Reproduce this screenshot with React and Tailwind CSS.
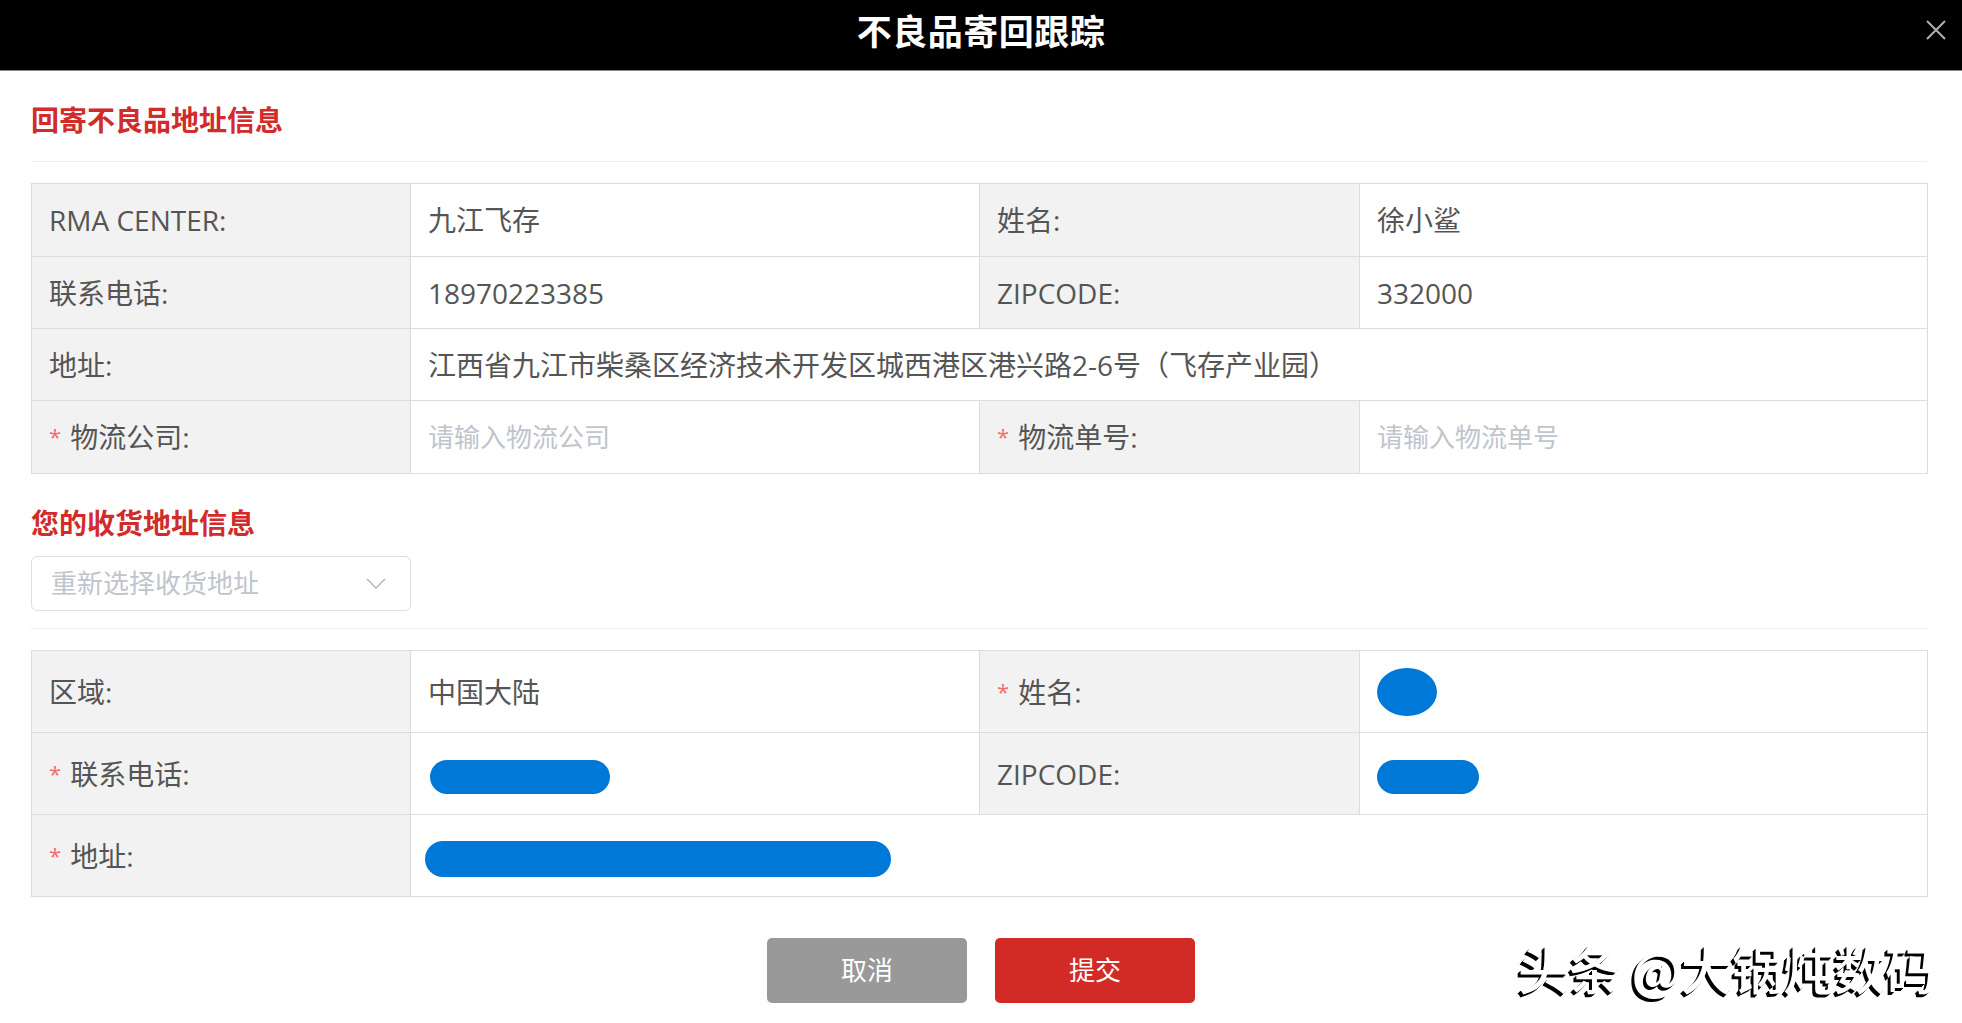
import React from 'react'

const font = "font-['Open_Sans','Noto_Sans_CJK_SC',sans-serif]"

const Req = () => <span className="text-[#f56c6c] text-[22px] mr-[9px] leading-none relative top-[-3px]">*</span>

const Blob = ({ className }) => <span className={`inline-block bg-[#0078d7] align-middle ${className}`} />

const Label = ({ children, req }) => (
  <td className="bg-[#f2f2f2] border border-[#dddddd] pl-[17px] text-[28px] text-[#555555] whitespace-nowrap">
    {req && <Req />}
    {children}
  </td>
)

const Value = ({ children, colSpan, placeholder }) => (
  <td colSpan={colSpan} className={`bg-white border border-[#dddddd] pl-[17px] whitespace-nowrap ${placeholder ? 'text-[26px] text-[#c0c4cc]' : 'text-[28px] text-[#555555]'}`}>
    {children}
  </td>
)

const SectionTitle = ({ children, className }) => (
  <h2 className={`text-[28px] leading-[40px] font-bold text-[#d22b2b] ${className}`}>{children}</h2>
)

const Cols = () => (
  <colgroup>
    <col className="w-[379px]" />
    <col className="w-[569px]" />
    <col className="w-[380px]" />
    <col className="w-[568px]" />
  </colgroup>
)

export default function App() {
  return (
    <div className={`relative w-full h-[1023px] bg-white overflow-hidden ${font}`}>
      {/* header */}
      <div className="relative h-[71px] bg-black border-b border-[#8a8a8a] flex items-center justify-center">
        <h1 className="text-[35px] font-bold text-white tracking-[0.5px] relative top-[-3px]">不良品寄回跟踪</h1>
        <button className="absolute right-[14px] top-[18px] w-[24px] h-[24px] flex items-center justify-center">
          <svg width="22" height="22" viewBox="0 0 22 22" fill="none" stroke="#b0b0b0" strokeWidth="2">
            <path d="M2 2 L20 20 M20 2 L2 20" />
          </svg>
        </button>
      </div>

      <div className="pl-[31px] pr-[35px]">
        <SectionTitle className="mt-[29px]">回寄不良品地址信息</SectionTitle>
        <div className="mt-[21px] h-px bg-[#eeeeee]" />

        <table className="mt-[21px] w-full table-fixed border-collapse">
          <Cols />
          <tbody>
            <tr className="h-[73px]">
              <Label>RMA CENTER:</Label>
              <Value>九江飞存</Value>
              <Label>姓名:</Label>
              <Value>徐小鲨</Value>
            </tr>
            <tr className="h-[72px]">
              <Label>联系电话:</Label>
              <Value>18970223385</Value>
              <Label>ZIPCODE:</Label>
              <Value>332000</Value>
            </tr>
            <tr className="h-[72px]">
              <Label>地址:</Label>
              <Value colSpan={3}>江西省九江市柴桑区经济技术开发区城西港区港兴路2-6号（飞存产业园）</Value>
            </tr>
            <tr className="h-[73px]">
              <Label req>物流公司:</Label>
              <Value placeholder>请输入物流公司</Value>
              <Label req>物流单号:</Label>
              <Value placeholder>请输入物流单号</Value>
            </tr>
          </tbody>
        </table>

        <SectionTitle className="mt-[29px]">您的收货地址信息</SectionTitle>

        <div className="mt-[13px] w-[380px] h-[55px] border border-[#dcdfe6] rounded-[6px] flex items-center justify-between pl-[19px] pr-[24px]">
          <span className="text-[26px] text-[#c0c4cc]">重新选择收货地址</span>
          <svg width="20" height="12" viewBox="0 0 20 12" fill="none" stroke="#b8b8b8" strokeWidth="1.5">
            <path d="M1 1 L10 10 L19 1" />
          </svg>
        </div>

        <div className="mt-[17px] h-px bg-[#eeeeee]" />

        <table className="mt-[21px] w-full table-fixed border-collapse">
          <Cols />
          <tbody>
            <tr className="h-[82px]">
              <Label>区域:</Label>
              <Value>中国大陆</Value>
              <Label req>姓名:</Label>
              <Value>
                <Blob className="w-[60px] h-[48px] rounded-[50%]" />
              </Value>
            </tr>
            <tr className="h-[82px]">
              <Label req>联系电话:</Label>
              <Value>
                <Blob className="ml-[2px] w-[180px] h-[34px] rounded-full" />
              </Value>
              <Label>ZIPCODE:</Label>
              <Value>
                <Blob className="w-[102px] h-[34px] rounded-full" />
              </Value>
            </tr>
            <tr className="h-[82px]">
              <Label req>地址:</Label>
              <Value colSpan={3}>
                <Blob className="ml-[-3px] w-[466px] h-[36px] rounded-full" />
              </Value>
            </tr>
          </tbody>
        </table>

        <div className="mt-[41px] flex justify-center gap-[28px] pl-[4px]">
          <button className="w-[200px] h-[65px] rounded-[5px] bg-[#999999] text-white text-[26px]">取消</button>
          <button className="w-[200px] h-[65px] rounded-[5px] bg-[#d22b26] text-white text-[26px]">提交</button>
        </div>
      </div>

      {/* watermark */}
      <div className="absolute left-[1518px] top-[938px] text-[51px] leading-[60px] font-medium text-white font-['Noto_Sans_CJK_SC',sans-serif] [text-shadow:-3px_3px_0_#000,-2px_2px_0_#000,-1px_1px_0_#000] whitespace-nowrap">
        头条 @大锅炖数码
      </div>
    </div>
  )
}
